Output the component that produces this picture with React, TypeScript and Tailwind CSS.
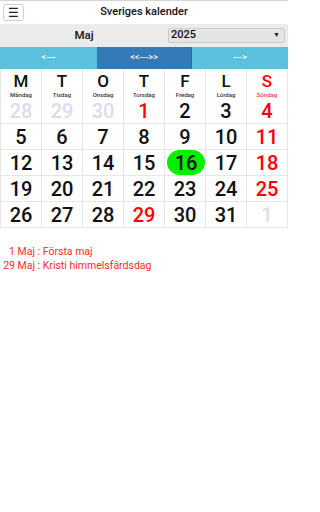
import React from "react";

type Cell = { d: number; kind: "out" | "day" | "red" };

const weekdays = [
  { l: "M", n: "Måndag" },
  { l: "T", n: "Tisdag" },
  { l: "O", n: "Onsdag" },
  { l: "T", n: "Torsdag" },
  { l: "F", n: "Fredag" },
  { l: "L", n: "Lördag" },
  { l: "S", n: "Söndag" },
];

// maj 2025, måndag först
const weeks: Cell[][] = [
  [
    { d: 28, kind: "out" },
    { d: 29, kind: "out" },
    { d: 30, kind: "out" },
    { d: 1, kind: "red" },
    { d: 2, kind: "day" },
    { d: 3, kind: "day" },
    { d: 4, kind: "red" },
  ],
  [5, 6, 7, 8, 9, 10, 11].map((d, i) => ({ d, kind: i === 6 ? "red" : "day" })),
  [12, 13, 14, 15, 16, 17, 18].map((d, i) => ({ d, kind: i === 6 ? "red" : "day" })),
  [19, 20, 21, 22, 23, 24, 25].map((d, i) => ({ d, kind: i === 6 ? "red" : "day" })),
  [
    { d: 26, kind: "day" },
    { d: 27, kind: "day" },
    { d: 28, kind: "day" },
    { d: 29, kind: "red" },
    { d: 30, kind: "day" },
    { d: 31, kind: "day" },
    { d: 1, kind: "out" },
  ],
];

const holidays = [
  { d: 1, text: "Första maj" },
  { d: 29, text: "Kristi himmelsfärdsdag" },
];

function colorFor(kind: Cell["kind"]) {
  if (kind === "out") return "text-[#dcdcea]";
  if (kind === "red") return "text-[#ff0000]";
  return "text-[#111]";
}

export default function App() {
  const today = 16;

  return (
    <div
      className="w-[288px] h-[512px] bg-white overflow-hidden border-t border-[#d4d4d4]"
      style={{ fontFamily: "Roboto, 'Liberation Sans', sans-serif" }}
    >
      {/* topprad */}
      <div className="flex items-center h-[23px]">
        <button className="ml-[3px] w-[21px] h-[17px] border border-[#cfcfcf] rounded-[3px] bg-white flex items-center justify-center text-[12px] leading-none text-[#222]">
          ☰
        </button>
        <div className="flex-1 text-center text-[11px] font-medium text-[#111]">Sveriges kalender</div>
        <div className="w-[24px]" />
      </div>

      {/* månad / år */}
      <div className="flex items-center h-[23px] bg-[#ebebeb]">
        <div className="w-[168px] text-center text-[11.5px] font-medium text-[#111]">Maj</div>
        <div className="w-[117px] h-[15px] bg-[#e4e4e4] border border-[#cdcdcd] rounded-[2px] flex items-center justify-between pl-[2px] pr-[4px]">
          <span className="text-[11px] font-medium text-[#111]">2025</span>
          <span className="text-[7px] text-[#222]">▼</span>
        </div>
      </div>

      {/* navigering */}
      <div className="flex h-[22px] text-white text-[9px] font-medium">
        <div className="w-[97px] bg-[#5bc0de] flex items-center justify-center">&lt;---</div>
        <div className="w-[95px] bg-[#337ab7] border-r border-[#2e6da4] flex items-center justify-center">&lt;&lt;---&gt;&gt;</div>
        <div className="flex-1 bg-[#5bc0de] flex items-center justify-center">---&gt;</div>
      </div>

      {/* kalender */}
      <div className="grid grid-cols-7 border-l border-[#e6e6e6]">
        {weekdays.map((w, i) => (
          <div
            key={i}
            className={`h-[29px] border-r border-[#e6e6e6] flex flex-col items-center pt-[4px] ${
              i === 6 ? "text-[#ff0000]" : "text-[#111]"
            }`}
          >
            <span className="text-[17px] font-medium leading-[17px]">{w.l}</span>
            <span className={`text-[6px] font-medium leading-[8px] mt-[1px] ${i === 6 ? "text-[#ff3333]" : "text-[#333]"}`}>
              {w.n}
            </span>
          </div>
        ))}
        {weeks.flat().map((c, i) => (
          <div
            key={i}
            className="h-[26px] border-r border-b border-[#e6e6e6] flex items-center justify-center"
          >
            {c.kind === "day" && c.d === today && i > 6 ? (
              <div className="ml-[2px] w-[39px] h-[25px] rounded-[13px] bg-[#00f000] flex items-center justify-center text-[20px] font-medium text-[#111]">
                {c.d}
              </div>
            ) : (
              <span className={`text-[20px] font-medium leading-none ${colorFor(c.kind)}`}>{c.d}</span>
            )}
          </div>
        ))}
      </div>

      {/* helgdagar */}
      <div className="mt-[17px] text-[10.5px] leading-[14px] text-[#ff2a2a]">
        {holidays.map((h) => (
          <div key={h.d} className="flex">
            <span className="inline-block w-[15px] text-right">{h.d}</span>
            <span className="whitespace-pre"> Maj : {h.text}</span>
          </div>
        ))}
      </div>
    </div>
  );
}
